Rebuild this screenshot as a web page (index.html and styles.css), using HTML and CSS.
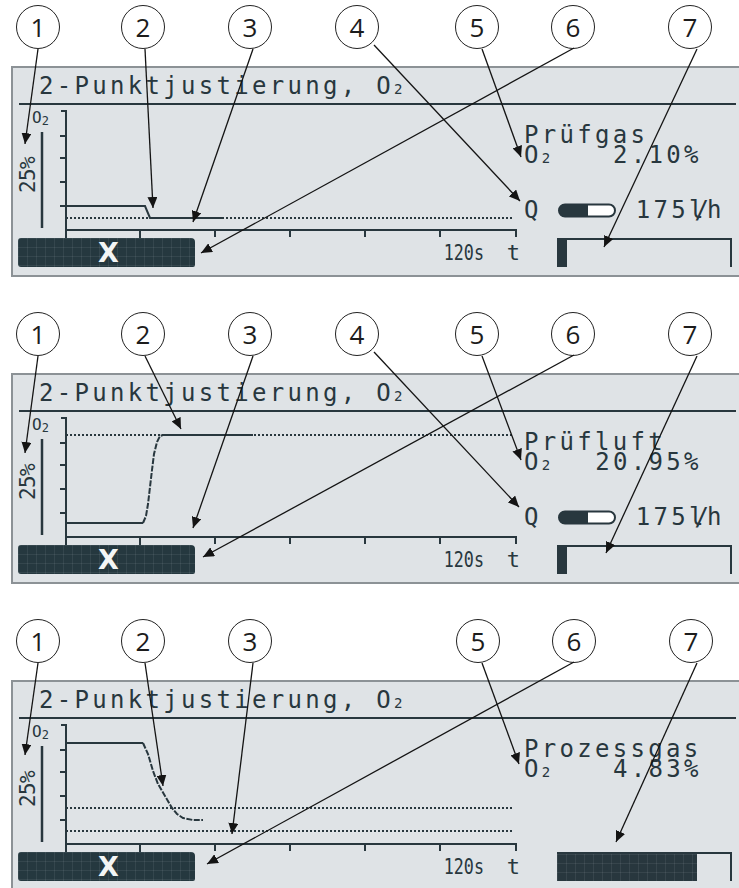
FILE: index.html
```html
<!DOCTYPE html>
<html lang="de">
<head>
    <meta charset="UTF-8">
    <meta name="viewport" content="width=device-width, initial-scale=1.0">
    <title>2-Punktjustierung O2</title>
    <link rel="stylesheet" href="styles.css">
</head>
<body>

    <svg class="defs" width="0" height="0">
        <defs>
            <marker id="head" viewBox="0 0 11 10" refX="11" refY="5" markerWidth="11" markerHeight="10"
                markerUnits="userSpaceOnUse" orient="auto">
                <path class="head" d="M0 0L11 5L0 10z" />
            </marker>
        </defs>
    </svg>

    <!-- Prüfgas -->
    <div class="figure">
        <div class="callouts">
            <span class="num c1">1</span>
            <span class="num c2">2</span>
            <span class="num c3">3</span>
            <span class="num c4">4</span>
            <span class="num c5">5</span>
            <span class="num c6">6</span>
            <span class="num c7">7</span>
        </div>
        <div class="lcd">
            <div class="lcd-title">2-Punktjustierung, O<span class="sub">2</span></div>
            <div class="lcd-body">
                <svg class="chart" width="511" height="133" viewBox="0 0 511 133">
                    <text class="ax-o2" x="19" y="18">O<tspan class="ax-sub" dy="2">2</tspan></text>
                    <path class="axis" d="M48 6H53V133M47 31H53M47 53H53M47 77H53M47 101H53M53 125H503V132M127 125V133M202 125V132M277 125V132M352 125V132M427 125V132" />
                    <path class="scale" d="M29 27V123" />
                    <text class="ax-pct" transform="translate(22 70) rotate(-90)" text-anchor="middle">25%</text>
                    <line class="dots" x1="53" y1="113" x2="500" y2="113" />
                    <polyline class="trace" points="53,101 132,101 137,113 211,113" />
                </svg>
                <div class="readout">
                    <div class="line">Prüfgas</div>
                    <div class="line">O<span class="sub">2</span>   2.10%</div>
                    <div class="line flow">
                        <span>Q</span>
                        <svg class="pill" width="60" height="15" viewBox="0 0 60 15">
                            <path class="pill-body" d="M8 1.5H52a6 6 0 0 1 0 12H8a6 6 0 0 1 0-12z" />
                            <path class="pill-fill" d="M8 1.5H31V13.5H8a6 6 0 0 1 0-12z" />
                        </svg>
                        <span class="rate">175<span class="lh">l/</span>h</span>
                    </div>
                </div>
                <div class="chart-foot">
                    <div class="softkey">X</div>
                    <div class="axis-label"><span class="secs">120s</span><span class="t">t</span></div>
                </div>
                <div class="status"><div class="status-fill"></div></div>
            </div>
        </div>
        <svg class="leaders" width="739" height="277">
            <line x1="38" y1="49" x2="25" y2="144" />
            <line x1="145" y1="49" x2="153" y2="208" />
            <line x1="253" y1="49" x2="193" y2="222" />
            <line x1="374" y1="45" x2="520" y2="201" />
            <line x1="482" y1="49" x2="521" y2="157" />
            <line x1="574" y1="48" x2="201" y2="253" />
            <line x1="697" y1="49" x2="604" y2="247" />
        </svg>
    </div>

    <!-- Prüfluft -->
    <div class="figure">
        <div class="callouts">
            <span class="num c1">1</span>
            <span class="num c2">2</span>
            <span class="num c3">3</span>
            <span class="num c4">4</span>
            <span class="num c5">5</span>
            <span class="num c6">6</span>
            <span class="num c7">7</span>
        </div>
        <div class="lcd">
            <div class="lcd-title">2-Punktjustierung, O<span class="sub">2</span></div>
            <div class="lcd-body">
                <svg class="chart" width="511" height="133" viewBox="0 0 511 133">
                    <text class="ax-o2" x="19" y="18">O<tspan class="ax-sub" dy="2">2</tspan></text>
                    <path class="axis" d="M48 6H53V133M47 31H53M47 53H53M47 77H53M47 101H53M53 125H503V132M127 125V133M202 125V132M277 125V132M352 125V132M427 125V132" />
                    <path class="scale" d="M29 27V123" />
                    <text class="ax-pct" transform="translate(22 70) rotate(-90)" text-anchor="middle">25%</text>
                    <line class="dots" x1="53" y1="23" x2="500" y2="23" />
                    <polyline class="trace" points="53,111 130,111" />
                    <polyline class="trace rise" points="130,111 133,104 135,92 137,75 139,58 141,42 144,30 147,24 150,23" />
                    <polyline class="trace" points="150,23 240,23" />
                </svg>
                <div class="readout">
                    <div class="line">Prüfluft</div>
                    <div class="line">O<span class="sub">2</span>  20.95%</div>
                    <div class="line flow">
                        <span>Q</span>
                        <svg class="pill" width="60" height="15" viewBox="0 0 60 15">
                            <path class="pill-body" d="M8 1.5H52a6 6 0 0 1 0 12H8a6 6 0 0 1 0-12z" />
                            <path class="pill-fill" d="M8 1.5H31V13.5H8a6 6 0 0 1 0-12z" />
                        </svg>
                        <span class="rate">175<span class="lh">l/</span>h</span>
                    </div>
                </div>
                <div class="chart-foot">
                    <div class="softkey">X</div>
                    <div class="axis-label"><span class="secs">120s</span><span class="t">t</span></div>
                </div>
                <div class="status"><div class="status-fill"></div></div>
            </div>
        </div>
        <svg class="leaders" width="739" height="277">
            <line x1="38" y1="49" x2="25" y2="146" />
            <line x1="145" y1="49" x2="181" y2="122" />
            <line x1="253" y1="49" x2="193" y2="221" />
            <line x1="374" y1="45" x2="519" y2="200" />
            <line x1="482" y1="49" x2="521" y2="153" />
            <line x1="574" y1="48" x2="203" y2="250" />
            <line x1="697" y1="49" x2="606" y2="246" />
        </svg>
    </div>

    <!-- Prozessgas -->
    <div class="figure">
        <div class="callouts">
            <span class="num c1">1</span>
            <span class="num c2">2</span>
            <span class="num c3">3</span>
            <span class="num c5 after3">5</span>
            <span class="num c6">6</span>
            <span class="num c7">7</span>
        </div>
        <div class="lcd">
            <div class="lcd-title">2-Punktjustierung, O<span class="sub">2</span></div>
            <div class="lcd-body">
                <svg class="chart" width="511" height="133" viewBox="0 0 511 133">
                    <text class="ax-o2" x="19" y="18">O<tspan class="ax-sub" dy="2">2</tspan></text>
                    <path class="axis" d="M48 6H53V133M47 31H53M47 53H53M47 77H53M47 101H53M53 125H503V132M127 125V133M202 125V132M277 125V132M352 125V132M427 125V132" />
                    <path class="scale" d="M29 27V123" />
                    <text class="ax-pct" transform="translate(22 70) rotate(-90)" text-anchor="middle">25%</text>
                    <line class="dots" x1="53" y1="89" x2="500" y2="89" />
                    <line class="dots" x1="53" y1="112" x2="500" y2="112" />
                    <polyline class="trace" points="53,24 130,24" />
                    <polyline class="trace rise" points="130,24 135,35 140,52 145,65 152,77 159,89 164,95 170,99 180,101 190,101" />
                </svg>
                <div class="readout">
                    <div class="line">Prozessgas</div>
                    <div class="line">O<span class="sub">2</span>   4.83%</div>
                </div>
                <div class="chart-foot">
                    <div class="softkey">X</div>
                    <div class="axis-label"><span class="secs">120s</span><span class="t">t</span></div>
                </div>
                <div class="status"><div class="status-fill full"></div></div>
            </div>
        </div>
        <svg class="leaders" width="739" height="277">
            <line x1="38" y1="49" x2="25" y2="141" />
            <line x1="145" y1="49" x2="163" y2="172" />
            <line x1="253" y1="49" x2="232" y2="220" />
            <line x1="482" y1="49" x2="519" y2="150" />
            <line x1="574" y1="48" x2="207" y2="250" />
            <line x1="697" y1="49" x2="616" y2="228" />
        </svg>
    </div>

</body>
</html>
```

FILE: styles.css
```css
html,
body {
    margin: 0;
    overflow: hidden;
}

body {
    width: 739px;
    height: 888px;
    background-color: #ffffff;
    color: #1c1c1c;
    font-family: 'Open Sans', 'Liberation Sans', sans-serif;
}

.defs {
    position: absolute;
    width: 0;
    height: 0;
}

.figure {
    position: relative;
    height: 277px;
    margin-bottom: 30px;
    overflow: hidden;
}

/* numbered callouts */
.callouts {
    display: flex;
    height: 66px;
    padding-top: 5px;
    box-sizing: border-box;
}

.num {
    width: 42px;
    height: 42px;
    border: 1.6px solid #222;
    border-radius: 50%;
    display: flex;
    align-items: center;
    justify-content: center;
    font-size: 26px;
    line-height: 1;
    background-color: #fff;
}

.c1 { margin-left: 16px; }
.c2 { margin-left: 61px; }
.c3 { margin-left: 63px; }
.c4 { margin-left: 63px; }
.c5 { margin-left: 76px; }
.c5.after3 { margin-left: 184px; }
.c6 { margin-left: 52px; }
.c7 { margin-left: 73px; }

/* display panel */
.lcd {
    margin-left: 11px;
    width: 728px;
    height: 207px;
    border: 2px solid #8c9296;
    background-color: #dfe3e6;
    color: #28373e;
    font-family: 'DejaVu Sans Mono', 'Liberation Mono', monospace;
}

.lcd-title {
    height: 34px;
    margin: 0 5px 0 6px;
    padding: 1px 0 0 20px;
    border-bottom: 2px solid #28373e;
    font-size: 24px;
    line-height: 34px;
    letter-spacing: 3.3px;
    white-space: pre;
}

.sub {
    display: inline-block;
    width: 18px;
    font-size: 14px;
    letter-spacing: 0;
}

.lcd-body {
    display: grid;
    grid-template-columns: 511px 1fr;
    grid-template-rows: 133px 29px;
}

.chart {
    display: block;
}

.chart .axis,
.chart .scale,
.chart .trace {
    fill: none;
    stroke: #28373e;
    stroke-width: 2;
}

.chart .scale {
    stroke-width: 2.5;
}

.chart .rise {
    stroke-dasharray: 6 1.5;
}

.chart .dots {
    stroke: #28373e;
    stroke-width: 2;
    stroke-dasharray: 2 2;
}

.chart text {
    fill: #28373e;
    font-family: 'DejaVu Sans Mono', monospace;
}

.ax-o2 {
    font-size: 16px;
}

.ax-sub {
    font-size: 12px;
}

.ax-pct {
    font-size: 21px;
    letter-spacing: -0.6px;
}

.readout {
    padding-top: 20px;
    font-size: 24px;
    line-height: 20px;
    letter-spacing: 3.3px;
}

.line {
    white-space: pre;
}

.flow {
    display: flex;
    align-items: center;
    margin-top: 32px;
    white-space: normal;
}

.pill {
    display: block;
    margin-left: 15px;
}

.pill-body {
    fill: #ffffff;
    stroke: #28373e;
    stroke-width: 2;
}

.pill-fill {
    fill: #28373e;
}

.rate {
    margin-left: 19px;
}

.lh {
    display: inline-block;
    width: 18px;
    letter-spacing: -9px;
}

.chart-foot {
    display: flex;
    align-items: center;
    padding: 0 4px 0 5px;
}

.softkey {
    width: 173px;
    height: 29px;
    padding-left: 4px;
    border-radius: 3px 4px 2px 3px;
    background-color: #25383f;
    background-image: linear-gradient(90deg, rgba(255, 255, 255, 0.07) 1px, transparent 1px),
        linear-gradient(rgba(255, 255, 255, 0.07) 1px, transparent 1px);
    background-size: 9px 9px;
    color: #f3f5f5;
    font-family: 'DejaVu Sans', sans-serif;
    font-weight: bold;
    font-size: 27px;
    line-height: 29px;
    text-align: center;
}

.axis-label {
    margin-left: auto;
    display: flex;
    align-items: baseline;
    font-size: 22px;
    line-height: 29px;
}

.axis-label .secs {
    display: inline-block;
    transform: scaleX(0.76);
    transform-origin: right center;
}

.axis-label .t {
    margin-left: 23px;
}

.status {
    display: flex;
    width: 173px;
    height: 27px;
    margin-left: 33px;
    border-top: 2px solid #28373e;
    border-right: 2px solid #28373e;
}

.status-fill {
    width: 10px;
    background-color: #28373e;
}

.status-fill.full {
    width: 140px;
    background-image: linear-gradient(90deg, rgba(255, 255, 255, 0.07) 1px, transparent 1px),
        linear-gradient(rgba(255, 255, 255, 0.07) 1px, transparent 1px);
    background-size: 9px 9px;
}

/* leader lines over the panel */
.leaders {
    position: absolute;
    top: 0;
    left: 0;
    overflow: visible;
    pointer-events: none;
}

.leaders line {
    stroke: #141414;
    stroke-width: 1.3;
    marker-end: url(#head);
}

.head {
    fill: #141414;
}
```
